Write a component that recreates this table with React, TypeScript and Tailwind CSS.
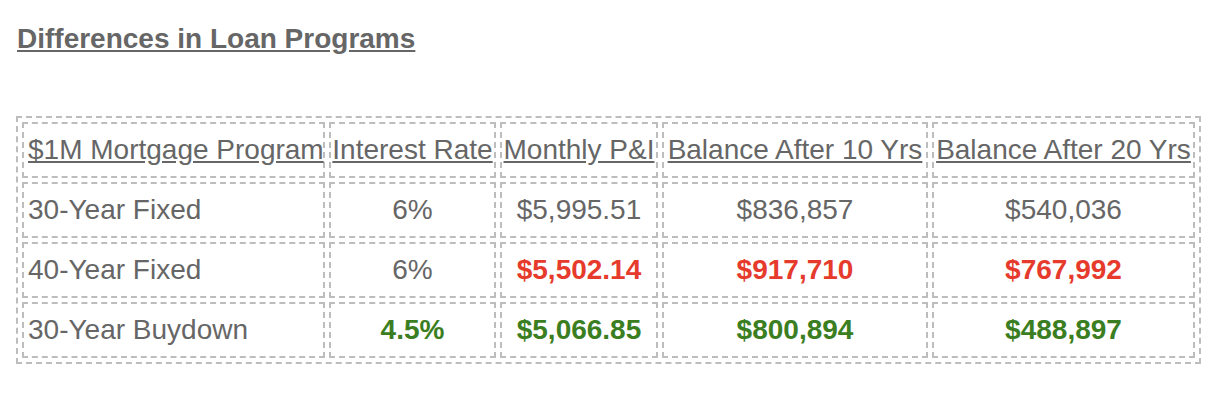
import React from "react";

type Cell = { text: string; tone?: "red" | "green" };

const rows: { label: string; cells: Cell[] }[] = [
  {
    label: "30-Year Fixed",
    cells: [{ text: "6%" }, { text: "$5,995.51" }, { text: "$836,857" }, { text: "$540,036" }],
  },
  {
    label: "40-Year Fixed",
    cells: [
      { text: "6%" },
      { text: "$5,502.14", tone: "red" },
      { text: "$917,710", tone: "red" },
      { text: "$767,992", tone: "red" },
    ],
  },
  {
    label: "30-Year Buydown",
    cells: [
      { text: "4.5%", tone: "green" },
      { text: "$5,066.85", tone: "green" },
      { text: "$800,894", tone: "green" },
      { text: "$488,897", tone: "green" },
    ],
  },
];

const headers = [
  "$1M Mortgage Program",
  "Interest Rate",
  "Monthly P&I",
  "Balance After 10 Yrs",
  "Balance After 20 Yrs",
];

const cellCls =
  "border-2 border-dashed border-[#bdbdbd] p-0 h-[56px] align-middle whitespace-nowrap";

function Value({ c }: { c: Cell }) {
  const color =
    c.tone === "red"
      ? "text-[#e63b2c] font-bold"
      : c.tone === "green"
      ? "text-[#3b7e21] font-bold"
      : "text-[#666666]";
  return <span className={color}>{c.text}</span>;
}

export default function App() {
  return (
    <div
      className="bg-white w-[1232px] h-[408px] text-[#666666]"
      style={{ fontFamily: '"Liberation Sans", Arial, sans-serif' }}
    >
      <div className="pl-[17px] pt-[23px] text-[28px] leading-[32px] font-bold underline">
        Differences in Loan Programs
      </div>
      <table className="ml-[16px] mt-[61px] w-[1185px] table-fixed border-separate border-spacing-[4px] border-2 border-dashed border-[#bdbdbd] text-[28px] leading-[32px]">
        <colgroup>
          <col className="w-[303px]" />
          <col className="w-[167px]" />
          <col className="w-[158px]" />
          <col className="w-[266px]" />
          <col className="w-[263px]" />
        </colgroup>
        <thead>
          <tr>
            {headers.map((h, i) => (
              <th
                key={h}
                className={`${cellCls} font-normal underline ${i === 0 ? "text-left pl-[4px]" : "text-center"}`}
              >
                {h}
              </th>
            ))}
          </tr>
        </thead>
        <tbody>
          {rows.map((r) => (
            <tr key={r.label}>
              <td className={`${cellCls} text-left pl-[4px]`}>{r.label}</td>
              {r.cells.map((c, i) => (
                <td key={i} className={`${cellCls} text-center`}>
                  <Value c={c} />
                </td>
              ))}
            </tr>
          ))}
        </tbody>
      </table>
    </div>
  );
}
